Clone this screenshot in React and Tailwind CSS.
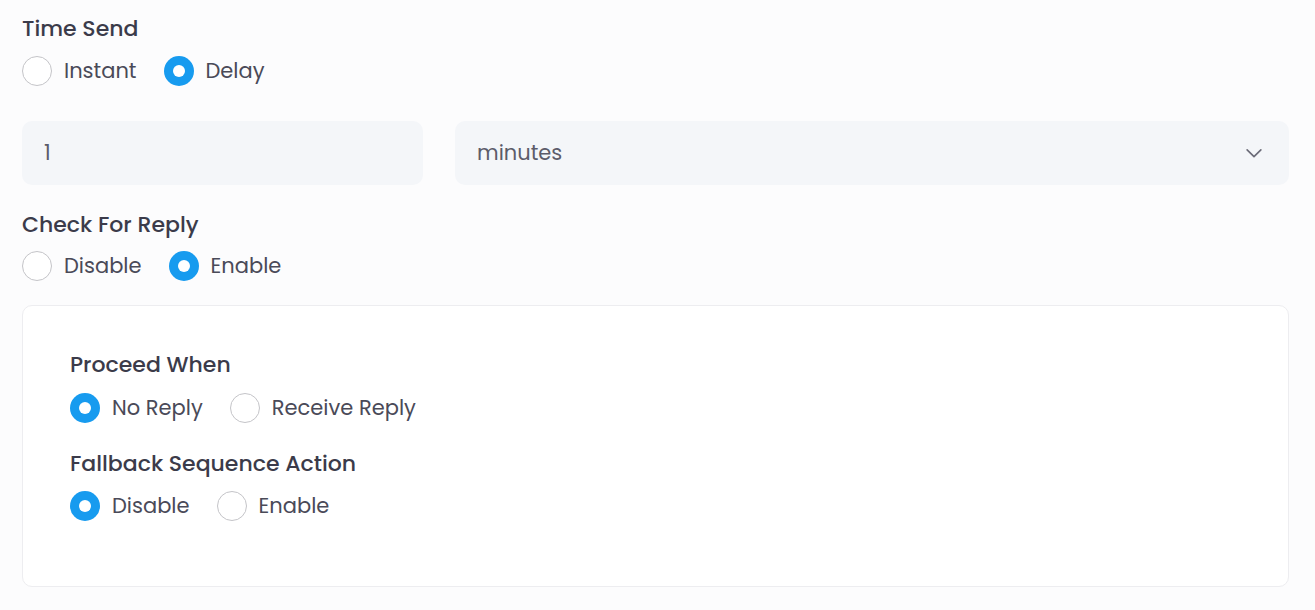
import React, { useState } from "react";

const Radio = ({ label, checked, onClick }) => (
  <button type="button" onClick={onClick} className="flex items-center gap-3 mr-[27px]">
    {checked ? (
      <span className="w-[30px] h-[30px] rounded-full bg-[#179bef] flex items-center justify-center flex-shrink-0">
        <span className="w-[12px] h-[12px] rounded-full bg-white" />
      </span>
    ) : (
      <span className="w-[30px] h-[30px] rounded-full border border-[#c4c4c8] bg-white flex-shrink-0" />
    )}
    <span className="text-[21px] leading-[30px] text-[#4a4a58]">{label}</span>
  </button>
);

const RadioGroup = ({ options, value, onChange }) => (
  <div className="flex items-center">
    {options.map((o) => (
      <Radio key={o} label={o} checked={value === o} onClick={() => onChange(o)} />
    ))}
  </div>
);

const Label = ({ children }) => (
  <p className="text-[22px] leading-[28px] font-medium text-[#3b3b4a]">{children}</p>
);

export default function App() {
  const [timeSend, setTimeSend] = useState("Delay");
  const [checkReply, setCheckReply] = useState("Enable");
  const [proceed, setProceed] = useState("No Reply");
  const [fallback, setFallback] = useState("Disable");

  return (
    <div
      className="min-h-screen bg-[#fcfcfd] pl-[22px] pr-[26px] pt-[15px]"
      style={{ fontFamily: "Poppins, Inter, 'Noto Sans', sans-serif" }}
    >
      <Label>Time Send</Label>
      <div className="mt-[13px]">
        <RadioGroup options={["Instant", "Delay"]} value={timeSend} onChange={setTimeSend} />
      </div>

      <div className="flex gap-8 mt-[35px]">
        <div className="w-[401px] h-16 rounded-[10px] bg-[#f4f6f9] flex items-center px-[22px] text-[21px] text-[#5c5c6a]">
          1
        </div>
        <div className="flex-1 h-16 rounded-[10px] bg-[#f4f6f9] flex items-center justify-between pl-[22px] pr-[24px] text-[21px] text-[#5c5c6a]">
          <span>minutes</span>
          <svg width="22" height="22" viewBox="0 0 24 24" fill="none" stroke="#6b6b78" strokeWidth="1.8" strokeLinecap="round" strokeLinejoin="round">
            <path d="M4.5 8.5l7.5 7.5 7.5-7.5" />
          </svg>
        </div>
      </div>

      <div className="mt-[26px]">
        <Label>Check For Reply</Label>
      </div>
      <div className="mt-[12px]">
        <RadioGroup options={["Disable", "Enable"]} value={checkReply} onChange={setCheckReply} />
      </div>

      {/* Reply settings card */}
      <div className="mt-[24px] bg-white border border-[#ededf0] rounded-[10px] pl-[47px] pt-[45px] pb-[65px]">
        <Label>Proceed When</Label>
        <div className="mt-[14px]">
          <RadioGroup options={["No Reply", "Receive Reply"]} value={proceed} onChange={setProceed} />
        </div>
        <div className="mt-[27px]">
          <Label>Fallback Sequence Action</Label>
        </div>
        <div className="mt-[13px]">
          <RadioGroup options={["Disable", "Enable"]} value={fallback} onChange={setFallback} />
        </div>
      </div>
    </div>
  );
}
